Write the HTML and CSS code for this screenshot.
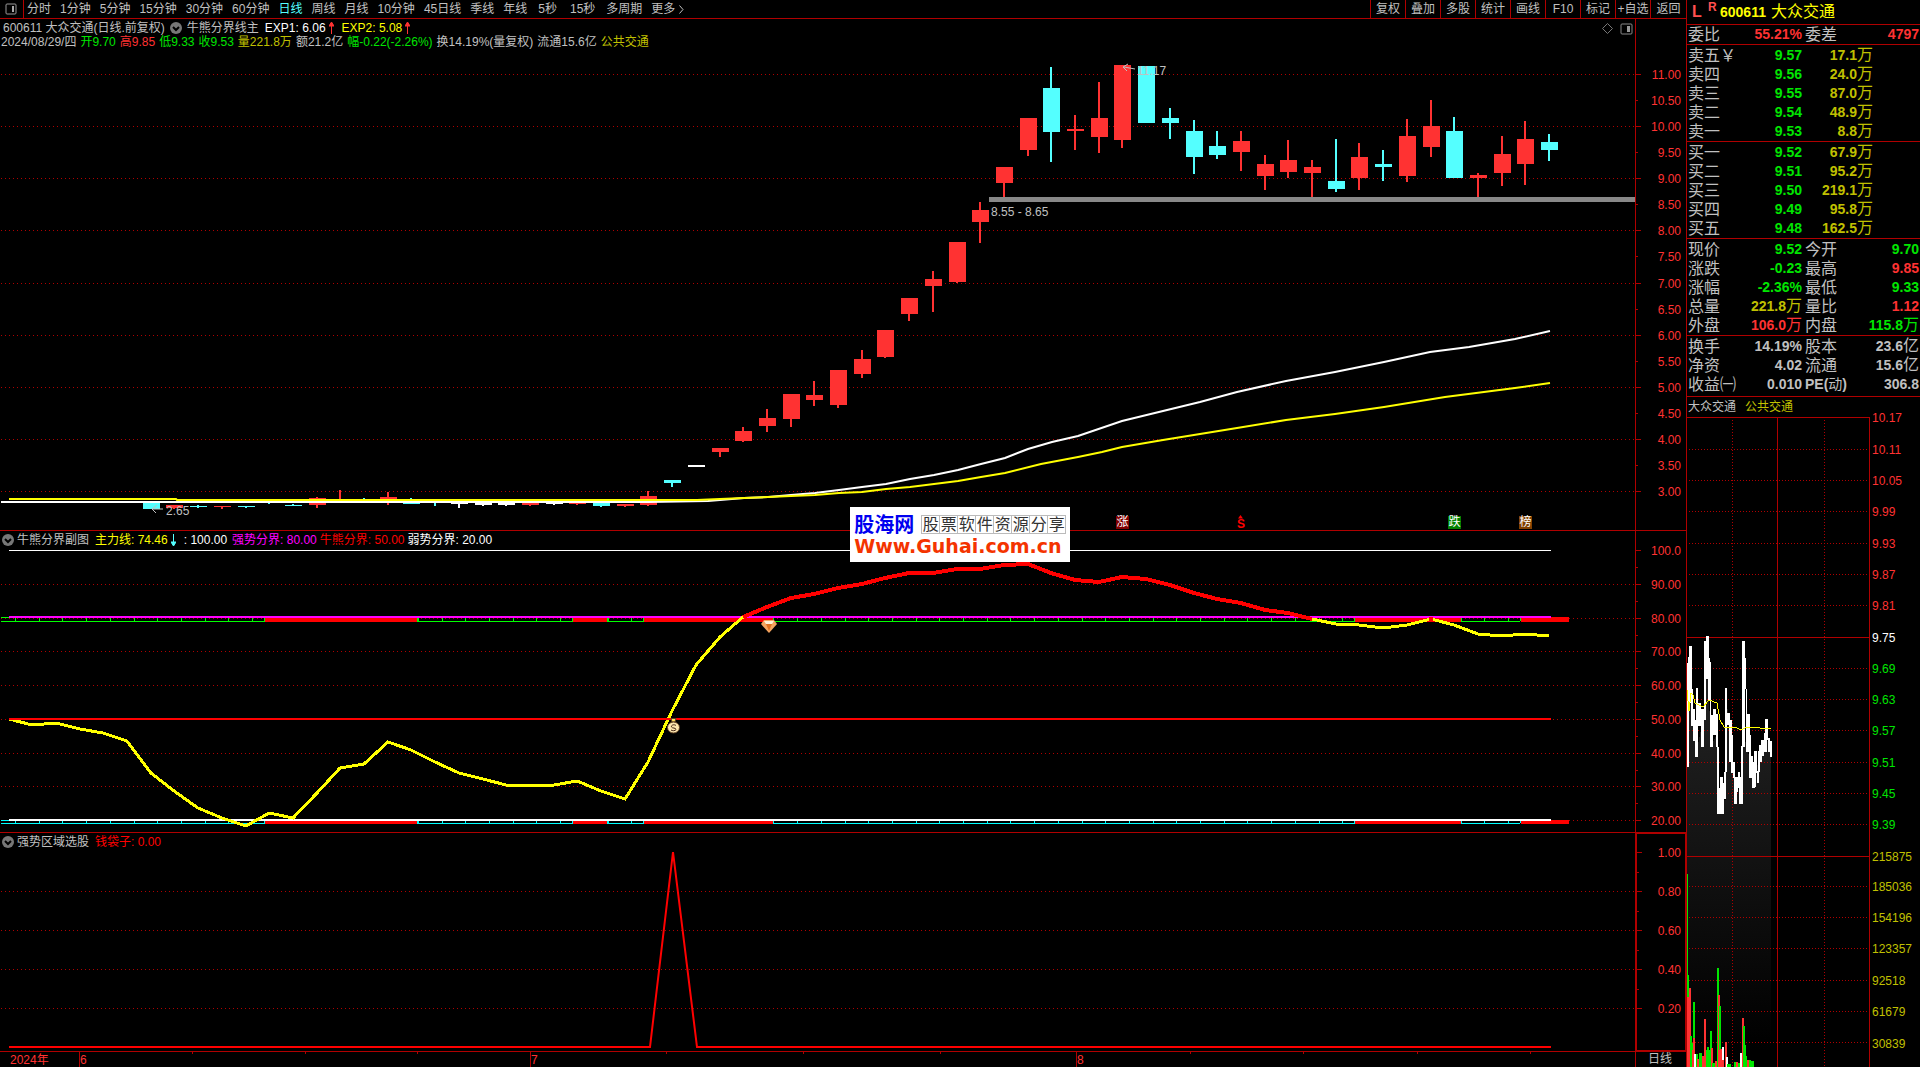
FILE: index.html
```html
<!DOCTYPE html>
<html lang="zh-CN">
<head>
<meta charset="utf-8">
<title>600611 大众交通</title>
<link rel="stylesheet" href="styles.css">
</head>
<body>
<div class="app">
  <main class="main">
    <header class="toolbar">
      <button class="tool-icon" type="button" aria-label="侧栏">
        <svg width="12" height="12" viewBox="0 0 12 12"><rect x="1" y="1" width="10" height="10" rx="1" fill="none" stroke="#999" stroke-width="1"/><rect x="7" y="3" width="2" height="6" fill="#aaa"/></svg>
      </button>
      <nav class="periods">
        <button type="button">分时</button>
        <button type="button">1分钟</button>
        <button type="button">5分钟</button>
        <button type="button">15分钟</button>
        <button type="button">30分钟</button>
        <button type="button">60分钟</button>
        <button type="button" class="active">日线</button>
        <button type="button">周线</button>
        <button type="button">月线</button>
        <button type="button">10分钟</button>
        <button type="button">45日线</button>
        <button type="button">季线</button>
        <button type="button">年线</button>
        <button type="button" class="wide">5秒</button>
        <button type="button" class="wide">15秒</button>
        <button type="button">多周期</button>
        <button type="button" class="more">更多<svg width="5" height="9" viewBox="0 0 5 9"><path d="M0.5 0.5L4 4.5L0.5 8.5" fill="none" stroke="#c0c0c0"/></svg></button>
      </nav>
      <nav class="actions">
        <button type="button">复权</button>
        <button type="button">叠加</button>
        <button type="button">多股</button>
        <button type="button">统计</button>
        <button type="button">画线</button>
        <button type="button">F10</button>
        <button type="button">标记</button>
        <button type="button">+自选</button>
        <button type="button">返回</button>
      </nav>
    </header>

    <section class="panel panel-price">
      <div class="plot">
        <svg class="canvas" id="price" viewBox="0 19 1635 511" preserveAspectRatio="none"></svg>
        <div class="legend">
          <span>600611 大众交通(日线.前复权)</span>
          <svg class="fold" width="12" height="12" viewBox="0 0 12 12"><circle cx="6" cy="6" r="6" fill="#777"/><path d="M3 5L6 8L9 5" fill="none" stroke="#000" stroke-width="2"/></svg>
          <span>牛熊分界线主</span>
          <span class="white lead">EXP1: 6.06<svg class="arrow" width="5" height="12" viewBox="0 0 5 12"><path d="M2.500 12V2M0 4L2.500 0L5 4Z" fill="#f33" stroke="#f33"/></svg></span>
          <span class="yellow lead">EXP2: 5.08<svg class="arrow" width="5" height="12" viewBox="0 0 5 12"><path d="M2.500 12V2M0 4L2.500 0L5 4Z" fill="#f33" stroke="#f33"/></svg></span>
        </div>
        <div class="legend quote-line">
          <span>2024/08/29/四</span>
          <span class="green">开9.70</span>
          <span class="red">高9.85</span>
          <span class="green">低9.33</span>
          <span class="green">收9.53</span>
          <span class="gold">量221.8万</span>
          <span>额21.2亿</span>
          <span class="green">幅-0.22(-2.26%)</span>
          <span>换14.19%(量复权)</span>
          <span>流通15.6亿</span>
          <span class="gold">公共交通</span>
        </div>
        <div class="corner">
          <svg width="11" height="11" viewBox="0 0 11 11"><path d="M5.500 0.500L10.500 5.500L5.500 10.500L0.500 5.500Z" fill="none" stroke="#777"/></svg>
          <svg width="13" height="12" viewBox="0 0 13 12"><rect x="1" y="1" width="11" height="10" rx="1" fill="none" stroke="#888"/><rect x="7" y="3" width="3" height="6" fill="#999"/></svg>
        </div>
        <div class="marks" id="price-marks"></div>
        <div class="logo">
          <div class="logo-top"><b>股海网</b><span class="logo-grid"><i>股</i><i>票</i><i>软</i><i>件</i><i>资</i><i>源</i><i>分</i><i>享</i></span></div>
          <a class="logo-url" href="#">Www.Guhai.com.cn</a>
        </div>
      </div>
      <div class="axis" id="price-axis"></div>
    </section>

    <section class="panel panel-trend">
      <div class="plot">
        <svg class="canvas" id="trend" viewBox="0 531 1635 301" preserveAspectRatio="none"></svg>
        <div class="legend">
          <svg class="fold" width="12" height="12" viewBox="0 0 12 12"><circle cx="6" cy="6" r="6" fill="#777"/><path d="M3 5L6 8L9 5" fill="none" stroke="#000" stroke-width="2"/></svg>
          <span>牛熊分界副图</span>
          <span class="yellow lead">主力线: 74.46<svg class="arrow" width="5" height="12" viewBox="0 0 5 12"><path d="M2.500 0V10M0 8L2.500 12L5 8Z" fill="#5ff" stroke="#5ff"/></svg></span>
          <span class="white lead">: 100.00</span>
          <span class="magenta">强势分界: 80.00</span>
          <span class="pure">牛熊分界: 50.00</span>
          <span class="white">弱势分界: 20.00</span>
        </div>
      </div>
      <div class="axis" id="trend-axis"></div>
    </section>

    <section class="panel panel-pick">
      <div class="plot">
        <svg class="canvas" id="pick" viewBox="0 833 1635 218" preserveAspectRatio="none"></svg>
        <div class="legend">
          <svg class="fold" width="12" height="12" viewBox="0 0 12 12"><circle cx="6" cy="6" r="6" fill="#777"/><path d="M3 5L6 8L9 5" fill="none" stroke="#000" stroke-width="2"/></svg>
          <span>强势区域选股</span>
          <span class="pure lead">钱袋子: 0.00</span>
        </div>
      </div>
      <div class="axis boxed" id="pick-axis"></div>
    </section>

    <footer class="dates">
      <div class="plot">
        <svg class="canvas" id="dates" viewBox="0 1052 1635 15" preserveAspectRatio="none"></svg>
        <div class="marks" id="date-marks"></div>
      </div>
      <div class="axis period">日线</div>
    </footer>
  </main>

  <aside class="side">
    <h1 class="name"><span class="tag-l">L</span><sup class="tag-r">R</sup><b>600611</b><span class="stock">大众交通</span></h1>
    <table class="info">
      <tr><th>委比</th><td class="red">55.21%</td><th>委差</th><td class="red">4797</td></tr>
    </table>
    <table class="depth">
      <tr><th>卖五￥</th><td>9.57</td><td class="gold">17.1<i>万</i></td></tr>
      <tr><th>卖四</th><td>9.56</td><td class="gold">24.0<i>万</i></td></tr>
      <tr><th>卖三</th><td>9.55</td><td class="gold">87.0<i>万</i></td></tr>
      <tr><th>卖二</th><td>9.54</td><td class="gold">48.9<i>万</i></td></tr>
      <tr><th>卖一</th><td>9.53</td><td class="gold">8.8<i>万</i></td></tr>
    </table>
    <table class="depth">
      <tr><th>买一</th><td>9.52</td><td class="gold">67.9<i>万</i></td></tr>
      <tr><th>买二</th><td>9.51</td><td class="gold">95.2<i>万</i></td></tr>
      <tr><th>买三</th><td>9.50</td><td class="gold">219.1<i>万</i></td></tr>
      <tr><th>买四</th><td>9.49</td><td class="gold">95.8<i>万</i></td></tr>
      <tr><th>买五</th><td>9.48</td><td class="gold">162.5<i>万</i></td></tr>
    </table>
    <table class="info tall">
      <tr><th>现价</th><td class="green">9.52</td><th>今开</th><td class="green">9.70</td></tr>
      <tr><th>涨跌</th><td class="green">-0.23</td><th>最高</th><td class="red">9.85</td></tr>
      <tr><th>涨幅</th><td class="green">-2.36%</td><th>最低</th><td class="green">9.33</td></tr>
      <tr><th>总量</th><td class="gold">221.8<i>万</i></td><th>量比</th><td class="red">1.12</td></tr>
      <tr><th>外盘</th><td class="red">106.0<i>万</i></td><th>内盘</th><td class="green">115.8<i>万</i></td></tr>
    </table>
    <table class="info last">
      <tr><th>换手</th><td>14.19%</td><th>股本</th><td>23.6<i>亿</i></td></tr>
      <tr><th>净资</th><td>4.02</td><th>流通</th><td>15.6<i>亿</i></td></tr>
      <tr><th>收益㈠</th><td>0.010</td><th class="pe"><b>PE(</b>动<b>)</b></th><td>306.8</td></tr>
    </table>
    <div class="tabs"><a href="#">大众交通</a><a href="#" class="gold">公共交通</a></div>
    <section class="mini">
      <svg class="canvas" id="mini" viewBox="1687 417 183 650" preserveAspectRatio="none"></svg>
      <div class="mini-axis" id="mini-axis"></div>
    </section>
  </aside>
</div>
<script src="charts.js"></script>
</body>
</html>
```
FILE: styles.css
```css
* { box-sizing: border-box; }

body {
  margin: 0;
  background: #000;
  color: #c0c0c0;
  font: 12px/14px "Liberation Sans", "Noto Sans CJK SC", sans-serif;
}

button {
  margin: 0;
  padding: 0;
  border: 0;
  background: none;
  color: inherit;
  font: inherit;
  white-space: nowrap;
}

a { color: inherit; text-decoration: none; }
i { font-style: normal; }

.white { color: #fff; }
.yellow { color: #ff0; }
.gold { color: #c0c000; }
.green { color: #00e600; }
.red { color: #ff3232; }
.pure { color: #f00; }
.magenta { color: #f0f; }

.app {
  display: grid;
  grid-template-columns: 1fr 234px;
  height: 100vh;
}

.main {
  display: grid;
  grid-template-rows: 19px 512fr 302fr 219fr 15px;
  min-width: 0;
  min-height: 0;
}

/* toolbar */
.toolbar {
  display: flex;
  border-bottom: 1px solid #b00000;
  line-height: 16px;
}
.tool-icon {
  display: flex;
  align-items: center;
  justify-content: center;
  width: 24px;
  padding-right: 2px;
  border-right: 1px solid #b00000;
}
.periods {
  display: flex;
  flex: 1;
  gap: 9px;
  padding-left: 3px;
}
.periods .active { color: #5ff; }
.periods .wide { padding: 0 2px; }
.periods .more { display: flex; align-items: center; gap: 4px; }
.actions { display: flex; }
.actions button {
  width: 35px;
  border-left: 1px solid #b00000;
}
.actions button:last-child { width: 36px; }

/* chart panels */
.panel, .dates {
  display: grid;
  grid-template-columns: 1fr 51px;
  min-height: 0;
}
.panel { border-bottom: 1px solid #b00000; }
.plot, .axis { position: relative; min-height: 0; min-width: 0; }
.axis { border-left: 1px solid #b00000; color: #ff3232; }
.axis.boxed {
  border: 1px solid #b00000;
  border-left-width: 2px;
}
.axis.period { padding-left: 12px; color: #c0c0c0; }
.canvas {
  position: absolute;
  inset: 0;
  width: 100%;
  height: 100%;
  shape-rendering: crispEdges;
}
.smooth { shape-rendering: geometricPrecision; }
.axis-label, .mini-label {
  position: absolute;
  right: 5px;
  margin-top: -6px;
  line-height: 14px;
}
.boxed .axis-label { right: 4px; }

.legend {
  position: relative;
  display: flex;
  align-items: center;
  gap: 3px;
  padding: 2px 0 0 2px;
  white-space: nowrap;
}
.legend span { display: flex; align-items: center; gap: 3px; }
.panel-price .legend { padding-left: 3px; }
.panel-price .fold { margin: 0 2px; }
.panel-price .quote-line { gap: 4px; padding: 0 0 0 1px; }
.legend .lead { margin-left: 3px; margin-right: 2px; }

.corner {
  position: absolute;
  top: 4px;
  right: 2px;
  display: flex;
  gap: 7px;
}
.marks { position: absolute; inset: 0; }
.mark { position: absolute; line-height: 14px; white-space: nowrap; }
.mark.bold { font-weight: bold; line-height: 12px; }
.badge {
  width: 13px;
  height: 13px;
  color: #fff;
  font-size: 12px;
  line-height: 12px;
  text-align: center;
}
.badge.rise { background: #800000; }
.badge.fall { background: #008000; }
.badge.list { background: #804000; }
.dates { color: #ff3232; line-height: 15px; }
.dates .mark { line-height: 16px; }

.logo {
  position: absolute;
  left: 52%;
  bottom: -32px;
  z-index: 1;
  width: 220px;
  height: 55px;
  padding: 6px 4px 0;
  background: #fff;
}
.logo-top { display: flex; align-items: center; justify-content: space-between; height: 23px; }
.logo-top b { color: #0000f0; font-size: 20px; line-height: 20px; }
.logo-grid { display: grid; grid-template-columns: repeat(8, 18px); border: 1px solid #bbb; border-right: 0; }
.logo-grid i {
  border-right: 1px solid #bbb;
  color: #333;
  font-size: 16px;
  line-height: 17px;
  text-align: center;
}
.logo-url {
  display: block;
  color: #f43400;
  font-family: "DejaVu Sans", sans-serif;
  font-size: 19px;
  font-weight: bold;
  line-height: 20px;
}

/* quote column */
.side {
  display: flex;
  flex-direction: column;
  min-height: 0;
  border-left: 1px solid #b00000;
  font-size: 16px;
}
.name {
  display: flex;
  align-items: center;
  height: 25px;
  margin: 0;
  padding-left: 5px;
  border-bottom: 1px solid #b00000;
  color: #ff0;
  font-size: 14px;
  font-weight: normal;
}
.tag-l { width: 16px; color: #ff5050; font-size: 16px; font-weight: bold; }
.tag-r { align-self: flex-start; width: 12px; color: #ff5050; font-size: 12px; font-weight: bold; }
.stock { padding-left: 5px; font-size: 16px; }

.side table {
  flex: none;
  width: 100%;
  table-layout: fixed;
  border-spacing: 0;
  border-bottom: 1px solid #b00000;
}
.side tr { height: 19px; }
.side th, .side td { padding: 0; line-height: 19px; white-space: nowrap; }
.side th { width: 50px; padding-left: 1px; font-weight: normal; text-align: left; }
.side td { font-size: 14px; font-weight: bold; text-align: right; }
.side td i { font-size: 16px; font-weight: normal; line-height: 16px; }
.side td:nth-child(2) { width: 65px; }
.info th:nth-child(3) { padding-left: 3px; }
.info td:nth-child(4) { padding-right: 1px; }
.depth { padding-top: 1px; }
.depth td { color: #00e600; }
.depth td.gold { color: #c0c000; padding-right: 47px; }
.tall { padding-top: 1px; }
.last { padding: 1px 0 2px; }
.side .pe { font-size: 14px; }
.tabs {
  display: flex;
  flex: none;
  gap: 9px;
  height: 20px;
  padding-left: 1px;
  font-size: 12px;
  line-height: 20px;
}
.mini {
  display: grid;
  grid-template-columns: 183px 1fr;
  flex: 1;
  min-height: 0;
  position: relative;
  font-size: 12px;
}
.mini .canvas { position: static; min-height: 0; }
.mini-axis { position: relative; }
.mini-label { right: auto; left: 2px; }
```
FILE: charts.js
```js
const NS = 'http://www.w3.org/2000/svg';
const STEP = 23.7;
const barX = i => Math.round(9.5 + STEP * i);

function shape(svg, tag, attrs) {
  const el = document.createElementNS(NS, tag);
  for (const k in attrs) el.setAttribute(k, attrs[k]);
  svg.appendChild(el);
  return el;
}
const rect = (svg, x, y, width, height, fill) => shape(svg, 'rect', { x, y, width, height, fill });
const poly = (svg, pts, stroke, w, cls) =>
  shape(svg, 'polyline', { points: pts.map(p => p.join(',')).join(' '), fill: 'none', stroke, 'stroke-width': w, class: cls || '' });
const dots = (svg, x1, y1, x2, y2, gap, stroke) =>
  shape(svg, 'line', { x1, y1, x2, y2, stroke: stroke || '#b00000', 'stroke-width': 1, 'stroke-dasharray': '1 ' + gap });

function label(host, text, top, cls) {
  const el = document.createElement('span');
  el.className = cls;
  el.textContent = text;
  el.style.top = top + '%';
  host.appendChild(el);
  return el;
}

function axis(id, y0, h, ticks, minors) {
  const host = document.getElementById(id);
  const svg = shape(host, 'svg', { class: 'canvas', viewBox: `0 ${y0} 50 ${h}`, preserveAspectRatio: 'none' });
  for (const [y, text, minor] of ticks) {
    rect(svg, 0, y, minor ? 2 : 5, 1, '#b00000');
    label(host, text, (y - y0) / h * 100, 'axis-label');
  }
  for (const y of minors) rect(svg, 0, y, 2, 1, '#b00000');
}

/* price panel */
const price = document.getElementById('price');
const priceTicks = [];
for (let k = 0; k <= 16; k++) {
  const y = Math.round(74 + k * 26.07);
  priceTicks.push([y, (11 - k / 2).toFixed(2), k % 2]);
  if (k % 2 === 0) dots(price, 1, y + 0.5, 1635, y + 0.5, 3);
}
axis('price-axis', 19, 511, priceTicks, []);

const R = '#ff3232', C = '#54ffff', W = '#ffffff';
/* index, colour, body top, body bottom, wick top, wick bottom */
const candles = [
  [2, R, 502, 503, 502, 503], [6, C, 502, 509, 502, 509], [7, R, 505, 508, 505, 509], [8, C, 506, 507, 505, 508],
  [9, R, 506, 507, 506, 509], [10, C, 506, 507, 506, 508], [11, C, 502, 503, 502, 504], [12, C, 505, 506, 504, 506],
  [13, R, 498, 505, 497, 508], [14, R, 500, 500, 490, 500], [15, C, 501, 503, 498, 503], [16, R, 497, 503, 492, 505],
  [17, C, 501, 504, 498, 504], [18, C, 502, 503, 502, 506], [19, W, 502, 504, 502, 508], [20, W, 503, 505, 502, 506],
  [21, W, 503, 505, 502, 506], [22, R, 503, 505, 502, 506], [23, W, 503, 504, 502, 505], [24, R, 503, 504, 502, 505],
  [25, C, 503, 506, 502, 507], [26, R, 504, 506, 504, 507],
  [27, R, 496, 505, 491, 506], [28, C, 480, 483, 480, 487], [29, W, 465, 467, 465, 467], [30, R, 448, 452, 448, 457],
  [31, R, 431, 441, 427, 442], [32, R, 418, 426, 409, 432], [33, R, 394, 419, 394, 427], [34, R, 395, 400, 381, 406],
  [35, R, 370, 405, 370, 408], [36, R, 359, 374, 350, 378], [37, R, 330, 357, 330, 358], [38, R, 298, 314, 298, 321],
  [39, R, 279, 286, 271, 312], [40, R, 242, 282, 242, 283], [41, R, 210, 222, 202, 243], [42, R, 167, 183, 167, 197],
  [43, R, 118, 150, 118, 156], [44, C, 88, 132, 67, 162], [45, R, 129, 131, 115, 150], [46, R, 118, 137, 82, 153],
  [47, R, 65, 140, 65, 148], [48, C, 66, 123, 66, 123], [49, C, 118, 123, 108, 139], [50, C, 131, 157, 120, 174],
  [51, C, 146, 155, 131, 159], [52, R, 141, 152, 131, 171], [53, R, 164, 176, 155, 190], [54, R, 160, 172, 140, 178],
  [55, R, 167, 173, 160, 197], [56, C, 181, 189, 139, 192], [57, R, 157, 178, 143, 190], [58, C, 164, 167, 150, 181],
  [59, R, 136, 176, 119, 182], [60, R, 126, 147, 100, 157], [61, C, 131, 178, 117, 178], [62, R, 175, 178, 173, 197],
  [63, R, 154, 173, 136, 186], [64, R, 139, 164, 121, 185], [65, C, 142, 150, 134, 161]
];
for (const [i, c, bt, bb, wt, wb] of candles) {
  const x = barX(i);
  if (bb > bt) rect(price, x - 9, bt, 17, bb - bt, c);
  rect(price, x - 2, wt, 2, wb - wt, c);
}
rect(price, 989, 197, 646, 5, '#888');
poly(price, [[1, 502], [649, 502], [708, 501], [744, 498], [768, 497], [791, 495], [815, 493], [839, 490], [862, 487],
  [886, 484], [910, 479], [934, 475], [958, 470], [981, 464], [1005, 458], [1028, 449], [1052, 442], [1078, 436],
  [1122, 421], [1163, 411], [1200, 402], [1237, 392], [1286, 381], [1335, 372], [1384, 362], [1430, 352],
  [1469, 347], [1515, 339], [1550, 331]], '#fff', 2, 'smooth');
poly(price, [[9, 499], [176, 499], [177, 500], [697, 500], [720, 499], [744, 498], [768, 497], [791, 496], [815, 495],
  [839, 493], [862, 492], [886, 489], [910, 487], [934, 484], [958, 481], [981, 477], [1005, 473], [1041, 464],
  [1078, 457], [1102, 452], [1122, 447], [1163, 440], [1237, 428], [1286, 420], [1335, 414], [1384, 407],
  [1445, 397], [1515, 388], [1550, 383]], '#ff0', 2, 'smooth');
poly(price, [[163, 509], [153, 509]], '#c0c0c0', 1, 'smooth');
poly(price, [[157, 505], [152, 509], [156, 513]], '#c0c0c0', 1, 'smooth');
poly(price, [[1135, 69], [1124, 67]], '#c0c0c0', 1, 'smooth');
poly(price, [[1128, 64], [1123, 67], [1127, 71]], '#c0c0c0', 1, 'smooth');
shape(price, 'path', { d: 'M1238 518.500L1240.500 515L1243 518.500Z', fill: '#f00', class: 'smooth' });

function mark(id, text, x, top, cls) {
  const el = label(document.getElementById(id), text, top, 'mark ' + cls);
  el.style.left = x / 1635 * 100 + '%';
}
const priceTop = y => (y - 19) / 511 * 100;
mark('price-marks', '2.65', 166, priceTop(504), '');
mark('price-marks', '8.55 - 8.65', 991, priceTop(205), '');
mark('price-marks', '11.17', 1137, priceTop(64), '');
mark('price-marks', '涨', 1116, priceTop(516), 'badge rise');
mark('price-marks', 'S', 1237, priceTop(518), 'bold pure');
mark('price-marks', '跌', 1448, priceTop(516), 'badge fall');
mark('price-marks', '榜', 1519, priceTop(516), 'badge list');

/* trend panel */
const trend = document.getElementById('trend');
const trendTicks = [], trendMinors = [];
for (let k = 0; k <= 8; k++) {
  const y = Math.round(550 + k * 33.75);
  trendTicks.push([y, k ? (100 - k * 10).toFixed(2) : '100.0', 0]);
  if (k) dots(trend, 1, y + 0.5, 1635, y + 0.5, 3);
  if (k < 8) trendMinors.push(Math.round(567 + k * 33.75));
}
axis('trend-axis', 531, 301, trendTicks, trendMinors);
rect(trend, 9, 550, 1542, 1, '#fff');

const hot = [[264, 417], [572, 607], [643, 773], [1354, 1461], [1520, 1569]];
function band(top, bottom, color) {
  rect(trend, 1, top, 8, 1, color);
  rect(trend, 1, bottom, 1519, 1, color);
  for (let i = 0; i < 64; i++) rect(trend, Math.round(15 + STEP * i), top, 1, bottom - top, color);
  for (const [a, b] of hot) {
    rect(trend, a, top, 1, bottom - top, color);
    rect(trend, a + 1, top, b - a - 1, bottom - top + 1, '#f00');
    if (b < 1569) rect(trend, b, top, 1, bottom - top, color);
  }
}
band(617, 621, '#0f0');
band(820, 823, '#0ff');
rect(trend, 9, 616, 1542, 2, '#f0f');
rect(trend, 9, 819, 1542, 2, '#fff');

const force = [719, 725, 723, 729, 733, 741, 773, 791, 808, 818, 826, 813, 818, 793, 768, 764, 742, 750, 762, 773, 779,
  785, 786, 785, 781, 791, 799, 762, 711, 665, 637, 617, 607, 598, 594, 588, 584, 578, 573, 573, 569, 569, 565, 564,
  573, 580, 582, 577, 579, 585, 593, 599, 603, 610, 613, 619, 624, 625, 628, 625, 619, 625, 634, 636, 634, 636];
const forcePts = force.map((y, i) => [barX(i) - 1, y]);
poly(trend, forcePts.slice(0, 32), '#ff0', 3);
poly(trend, forcePts.slice(55), '#ff0', 3);
poly(trend, forcePts.slice(31, 56), '#f00', 4);
rect(trend, 9, 718, 1542, 2, '#f00');
rect(trend, 1429, 617, 4, 4, '#f00');
/* diamond */
shape(trend, 'path', { d: 'M764 620H774L777 624L769 633L761 624Z', fill: '#f4a460', class: 'smooth' });
shape(trend, 'path', { d: 'M764 621H774L772 624H766Z', fill: '#fff0d8', class: 'smooth' });
shape(trend, 'path', { d: 'M766 624H772L769 631Z', fill: '#e07020', class: 'smooth' });
/* money bag */
shape(trend, 'path', { d: 'M671 718.500H676L675 722H672Z', fill: '#ffe060', stroke: '#604020', class: 'smooth' });
shape(trend, 'ellipse', { cx: 673.5, cy: 727.5, rx: 6, ry: 5.5, fill: '#ffe8b0', stroke: '#604020', class: 'smooth' });
shape(trend, 'path', { d: 'M676 725.500C674 724 671 725 671.500 727C672 728.500 676 727.500 676 729.500C675.500 731 672 731 671 730', fill: 'none', stroke: '#402010', class: 'smooth' });

/* pick panel */
const pick = document.getElementById('pick');
const pickTicks = [], pickMinors = [];
for (let k = 0; k < 5; k++) {
  const y = 852 + k * 39;
  pickTicks.push([y, (1 - k * 0.2).toFixed(2), 0]);
  if (k) dots(pick, 1, y + 0.5, 1635, y + 0.5, 3);
  if (k < 4) pickMinors.push(y + 20);
}
axis('pick-axis', 834, 216, pickTicks, pickMinors);
poly(pick, [[9, 1047], [650, 1047], [673, 852], [697, 1047], [1551, 1047]], '#f00', 2, 'smooth');

/* date strip */
const dates = document.getElementById('dates');
for (const x of [79, 530, 1076]) rect(dates, x, 1052, 1, 15, '#b00000');
for (const x of [192, 305, 417, 666, 803, 940, 1190, 1303, 1417, 1530]) rect(dates, x, 1052, 1, 2, '#b00000');
mark('date-marks', '2024年', 10, 0, '');
mark('date-marks', '6', 80, 0, '');
mark('date-marks', '7', 531, 0, '');
mark('date-marks', '8', 1077, 0, '');

/* intraday chart */
const mini = document.getElementById('mini');
const grad = shape(shape(mini, 'defs', {}), 'linearGradient', { id: 'fade', gradientUnits: 'userSpaceOnUse', x1: 0, y1: 650, x2: 0, y2: 1050 });
shape(grad, 'stop', { offset: 0, 'stop-color': '#262626' });
shape(grad, 'stop', { offset: 1, 'stop-color': '#000' });
shape(mini, 'path', {
  d: 'M1687 1067V700H1692V720L1697 750L1703 720L1706 690V679H1709V700L1711 745L1717 735V800H1726V690L1728 715L1734 770V790H1740V785H1743V700H1745V740L1750 760L1755 770L1760 760L1767 740L1771 750V1067Z',
  fill: 'url(#fade)'
});
for (const y of [449, 480, 511, 543, 574, 605, 668, 699, 730, 762, 793, 824, 886, 917, 948, 980, 1011, 1042])
  dots(mini, 1689, y + 0.5, 1869, y + 0.5, 2);
for (const x of [1732, 1824]) dots(mini, x + 0.5, 420, x + 0.5, 1067, 2);
for (const y of [417, 637, 856]) rect(mini, 1687, y, 183, 1, '#b00000');
for (const x of [1777, 1869]) rect(mini, x, 417, 1, 650, '#b00000');

/* x, width, top, bottom */
const ticks = [
  [1687, 2, 663, 767], [1688, 1, 657, 700], [1689, 3, 646, 703], [1691, 2, 689, 726], [1693, 2, 709, 741],
  [1695, 3, 720, 757], [1696, 2, 688, 757], [1698, 3, 703, 726], [1701, 3, 709, 747], [1704, 2, 641, 720],
  [1706, 3, 636, 679], [1708, 2, 658, 700], [1710, 1, 662, 747], [1711, 2, 715, 747], [1713, 3, 709, 735],
  [1716, 2, 714, 747], [1717, 2, 747, 814], [1719, 1, 788, 814], [1720, 3, 777, 814], [1723, 1, 783, 814],
  [1724, 1, 772, 799], [1725, 1, 688, 799], [1726, 1, 688, 772], [1727, 3, 713, 725], [1729, 3, 720, 762],
  [1731, 2, 735, 773], [1733, 2, 762, 778], [1734, 3, 777, 804], [1736, 2, 777, 792], [1738, 2, 772, 788],
  [1739, 3, 777, 804], [1741, 2, 746, 804], [1742, 3, 641, 747], [1745, 1, 658, 689], [1746, 1, 689, 752],
  [1747, 3, 714, 752], [1749, 2, 735, 778], [1751, 2, 756, 778], [1752, 3, 762, 788], [1754, 2, 751, 787],
  [1755, 2, 751, 773], [1757, 2, 771, 783], [1758, 2, 751, 772], [1759, 3, 745, 762], [1761, 3, 740, 756],
  [1764, 3, 733, 752], [1765, 3, 719, 740], [1768, 2, 738, 752], [1770, 2, 741, 757]
];
for (const [x, w, a, b] of ticks) rect(mini, x, a, w, b - a, '#fff');
poly(mini, [[1687, 690], [1689, 711], [1691, 693], [1693, 695], [1695, 703], [1703, 707], [1709, 700], [1717, 703],
  [1720, 720], [1724, 727], [1735, 727], [1741, 730], [1747, 727], [1760, 728], [1771, 729]], '#ff0', 1);

const G = '#00e600';
/* x, width, top, bottom, colour */
const volumes = [
  [1687, 1, 874, 997, G], [1688, 1, 975, 997, G], [1687, 3, 997, 1067, R], [1689, 2, 988, 1067, R],
  [1690, 2, 1036, 1067, G], [1692, 1, 1043, 1067, G], [1692, 2, 1050, 1067, R], [1693, 2, 1002, 1038, G],
  [1693, 2, 1038, 1067, R], [1694, 2, 1054, 1067, W], [1696, 2, 1054, 1067, G], [1697, 2, 1059, 1067, R],
  [1699, 3, 1053, 1067, G], [1702, 2, 1056, 1067, R], [1704, 2, 1019, 1067, R], [1706, 4, 1050, 1067, G],
  [1707, 2, 1047, 1067, G], [1710, 2, 1031, 1067, G], [1711, 2, 1048, 1067, R], [1712, 3, 1063, 1067, G],
  [1715, 2, 1061, 1067, R], [1717, 2, 968, 1067, G], [1718, 2, 995, 1067, R], [1719, 2, 1006, 1050, G],
  [1720, 2, 1049, 1067, R], [1722, 2, 1047, 1060, W], [1722, 2, 1060, 1067, R], [1725, 2, 1042, 1067, R],
  [1726, 2, 1057, 1067, W], [1727, 4, 1064, 1067, G], [1734, 2, 1062, 1067, G], [1736, 2, 1062, 1067, R],
  [1738, 2, 1063, 1067, G], [1740, 2, 1053, 1067, W], [1742, 2, 1018, 1067, R], [1743, 2, 1026, 1067, G],
  [1744, 2, 1045, 1067, G], [1745, 2, 1056, 1067, G], [1747, 2, 1060, 1067, R], [1749, 2, 1060, 1067, G],
  [1750, 4, 1061, 1067, G]
];
for (const [x, w, a, b, c] of volumes) rect(mini, x, a, w, b - a, c);

const miniAxis = document.getElementById('mini-axis');
const miniLabels = [
  [417, '10.17', 'red'], [449, '10.11', 'red'], [480, '10.05', 'red'], [511, '9.99', 'red'], [543, '9.93', 'red'],
  [574, '9.87', 'red'], [605, '9.81', 'red'], [637, '9.75', 'white'], [668, '9.69', 'green'], [699, '9.63', 'green'],
  [730, '9.57', 'green'], [762, '9.51', 'green'], [793, '9.45', 'green'], [824, '9.39', 'green'], [856, '215875', 'gold'],
  [886, '185036', 'gold'], [917, '154196', 'gold'], [948, '123357', 'gold'], [980, '92518', 'gold'],
  [1011, '61679', 'gold'], [1043, '30839', 'gold']
];
for (const [y, text, cls] of miniLabels) label(miniAxis, text, (y - 417) / 650 * 100, 'mini-label ' + cls);
```
